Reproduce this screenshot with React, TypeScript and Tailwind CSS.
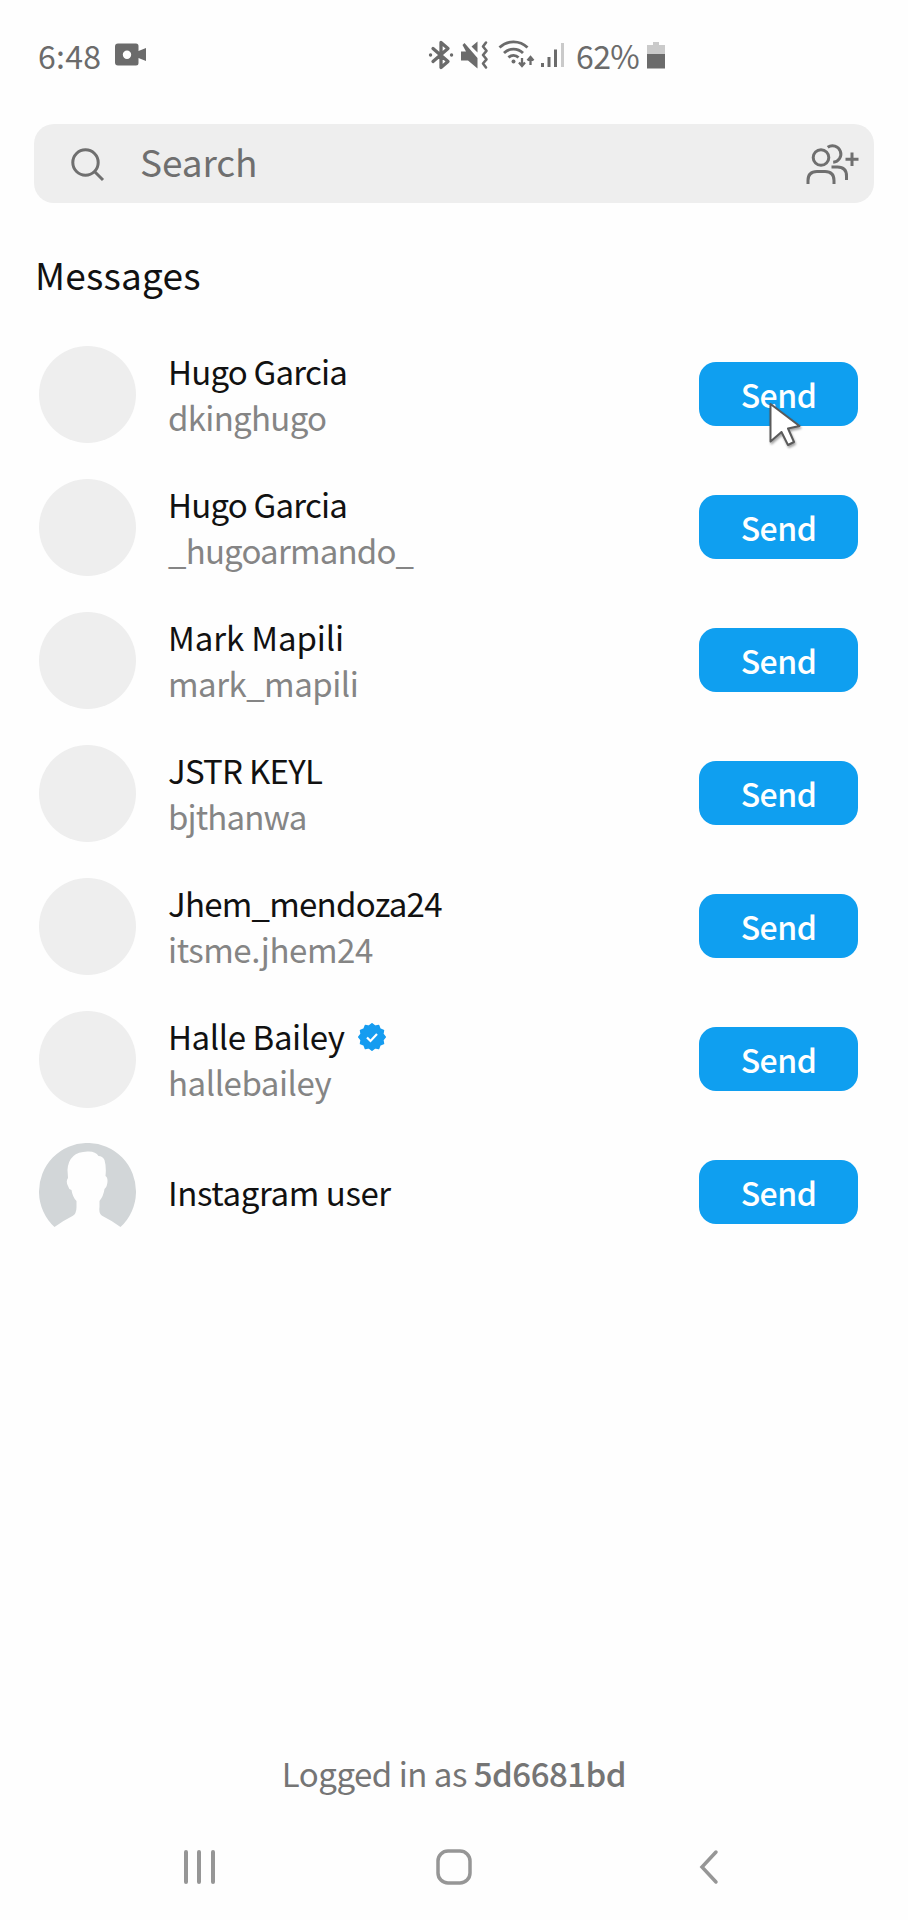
type User = {
  name: string;
  handle?: string;
  nameClass: string;
  handleClass?: string;
  verified?: boolean;
  placeholder?: boolean;
};

const users: User[] = [
  { name: 'Hugo Garcia', handle: 'dkinghugo', nameClass: 'tracking-[-0.8px]', handleClass: 'tracking-[-0.7px]' },
  { name: 'Hugo Garcia', handle: '_hugoarmando_', nameClass: 'tracking-[-0.8px]', handleClass: 'tracking-[-0.8px]' },
  { name: 'Mark Mapili', handle: 'mark_mapili', nameClass: 'tracking-[-0.1px]', handleClass: 'tracking-[-0.5px]' },
  { name: 'JSTR KEYL', handle: 'bjthanwa', nameClass: 'tracking-[-0.75px]', handleClass: 'tracking-[-0.85px]' },
  { name: 'Jhem_mendoza24', handle: 'itsme.jhem24', nameClass: 'tracking-[-0.75px]', handleClass: 'tracking-[-0.45px]' },
  { name: 'Halle Bailey', handle: 'hallebailey', nameClass: 'tracking-[-0.4px]', handleClass: 'tracking-[-0.45px]', verified: true },
  { name: 'Instagram user', nameClass: 'tracking-[-0.4px]', placeholder: true },
];

function StatusBar() {
  return (
    <div className="flex h-28 items-start justify-between pt-[32px] text-[#6b6b6b]">
      <div className="flex items-center pl-[38px]">
        <span className="w-[77px] text-[32px] leading-[46px] tracking-[0.3px]">6:48</span>
        <svg className="h-6 w-8" viewBox="0 0 32 24" fill="currentColor">
          <path fillRule="evenodd" d="M3 0.5h18q2.500 0 2.500 2.500v5l7.500-3v13l-7.500-3v5q0 2.500-2.500 2.500H3q-3 0-3-3v-16q0-3 3-3zM12 7.500a4.200 4.200 0 1 0 0 8.400a4.200 4.200 0 1 0 0-8.400z" />
        </svg>
      </div>
      <div className="flex items-center pr-[242px]">
        <svg className="h-[30px] w-[26px]" viewBox="0 0 26 30" fill="none" stroke="currentColor" strokeWidth="3.300" strokeLinecap="round" strokeLinejoin="round">
          <path d="M5 8.500l15 13-7 6v-25l7 6-15 13M2.500 15h.1M23.500 15h.1" />
        </svg>
        <svg className="ml-[6px] h-[30px] w-[30px]" viewBox="0 0 30 30" fill="currentColor">
          <path d="M1 11.500h5L2.500 5l2-2L17.500 18v10.500L8 20.500H1zM11.500 6.500l6-5v11z" />
          <path d="M26 2.500l-3 4 3.500 4.300-3.500 4.200 3.500 4.300-3.500 4.200 3 4" fill="none" stroke="currentColor" strokeWidth="2.600" strokeLinejoin="round" strokeLinecap="round" />
        </svg>
        <svg className="ml-[8px] h-[30px] w-[38px]" viewBox="0 0 38 30" fill="none" stroke="currentColor" strokeWidth="2.800">
          <path d="M1.500 7.500a20 20 0 0 1 28 0M6 13a13.500 13.500 0 0 1 19 0M10.500 17.500a7 7 0 0 1 10 0" />
          <circle cx="15.500" cy="21.500" r="2" fill="currentColor" stroke="none" />
          <path d="M24 18v7.500M21 22.500l3 3.500 3-3.500M32.500 25v-7M29.500 20.500l3-3.500 3 3.500" strokeWidth="2.300" />
        </svg>
        <svg className="ml-[5px] h-[30px] w-[24px]" viewBox="0 0 24 30" fill="currentColor">
          <path d="M0 23h3v4H0zM6.500 17h3v10h-3zM13 9.500h3V27h-3z" />
          <path d="M20 3h3v24h-3z" opacity="0.35" />
        </svg>
        <span className="ml-[11px] w-[71px] whitespace-nowrap text-[32px] leading-[46px] tracking-[-0.6px]">62%</span>
        <svg className="h-[30px] w-[19px]" viewBox="0 0 19 30" fill="currentColor">
          <path d="M6 2h6v3h6v9H0V5h6z" opacity="0.35" />
          <path d="M0 14h18v14.500H0z" />
        </svg>
      </div>
    </div>
  );
}

function SearchBar() {
  return (
    <div className="mx-[34px] mt-[12px] flex h-[79px] items-center rounded-[20px] bg-[#eeeeee] pr-[15px] pl-[36px] text-[#6f6f6f]">
      <svg className="h-9 w-9" viewBox="0 0 36 36" fill="none" stroke="currentColor" strokeWidth="3">
        <circle cx="15.500" cy="16.500" r="12.700" />
        <path d="M24.500 25.500l8.500 8.500" />
      </svg>
      <span className="mt-[-5px] ml-[34px] text-[37px] leading-[52px] tracking-[-0.1px]">Search</span>
      <svg className="mt-px ml-auto h-[42px] w-[54px]" viewBox="0 0 54 42" fill="none" stroke="currentColor" strokeWidth="3">
        <circle cx="16" cy="14.500" r="7.800" />
        <path d="M3 41v-3.500q0-9 9-9h8q9 0 9 9V41" />
        <path d="M22.700 4.300a8.300 8.300 0 1 1 5.500 15" />
        <path d="M26.500 24h6q9 0 9 9v4" />
        <path d="M47 9.500v13.500M40.500 16.200h13" />
      </svg>
    </div>
  );
}

function VerifiedBadge() {
  // scalloped edge, 12 bumps
  const points = Array.from({ length: 24 }, (_, i) => {
    const r = i % 2 ? 11.2 : 13.2;
    const a = (i * Math.PI) / 12;
    return `${14 + r * Math.cos(a)},${14 + r * Math.sin(a)}`;
  }).join(' ');
  return (
    <svg className="h-7 w-7" viewBox="0 0 28 28">
      <polygon points={points} fill="#159cf0" stroke="#159cf0" strokeWidth="1.600" strokeLinejoin="round" />
      <path d="M9 14.500l3.500 3.500 6.500-7" fill="none" stroke="#fff" strokeWidth="2.200" />
    </svg>
  );
}

function PlaceholderAvatar() {
  return (
    <svg className="mt-px h-[98px] w-[97px]" viewBox="0.5 0 97 98">
      <path
        fill="#d2d6d8"
        d="M16 84A48.500 48.500 0 1 1 82 84Q74 78 64 73Q60 71 61 64V58Q65 53 66 46Q69 43 69 38Q69 34 67 33Q68 24 66 17Q64 13 60 13Q57 8 49 8.500Q30 9 29 27L29.500 35Q27 38 29.500 43Q30 46 33 47Q34 54 38 58V64Q38 71 34 73Q24 78 16 84z"
      />
    </svg>
  );
}

function Cursor() {
  return (
    <svg className="absolute top-[38px] left-[68px] h-12 w-10 drop-shadow-[1px_2px_1px_rgba(0,0,0,0.35)]" viewBox="0 0 40 48">
      <path d="M3.500 4L32.500 26l-11.500 2.500L27 42l-6 3L14.500 32l-11 9.500z" fill="#fff" stroke="#5a5a5a" strokeWidth="2" strokeLinejoin="round" />
    </svg>
  );
}

function UserRow({ user, hovered }: { user: User; hovered: boolean }) {
  return (
    <div className="flex h-[133px] items-center pr-[50px] pl-[39px]">
      {user.placeholder ? <PlaceholderAvatar /> : <div className="mt-px h-[97px] w-[97px] rounded-full bg-[#eeeeee]" />}
      <div className="mt-[2px] ml-8 flex-1 text-[33px] leading-[45.5px] whitespace-nowrap">
        <div className="flex items-center gap-[13px] text-[#111]">
          <span className={user.nameClass}>{user.name}</span>
          {user.verified && <VerifiedBadge />}
        </div>
        {user.handle && (
          <div className="text-[#858585]">
            <span className={user.handleClass}>{user.handle}</span>
          </div>
        )}
      </div>
      <div className="relative">
        <button className="block h-16 w-[159px] rounded-[17px] bg-[#0f9ff0] text-[32px] leading-[64px] font-medium tracking-[-0.5px] text-white">
          Send
        </button>
        {hovered && <Cursor />}
      </div>
    </div>
  );
}

export default function App() {
  return (
    <div className="flex h-[1920px] w-[908px] flex-col bg-[#fefefe] font-['Noto_Sans_CJK_SC','Noto_Sans',sans-serif]">
      <StatusBar />
      <SearchBar />
      <h1 className="mt-[44px] h-[80px] pl-[35px] text-[37px] leading-[54px] tracking-[0.2px] text-[#111]">
        <span>Messages</span>
      </h1>
      <div>
        {users.map((user, i) => (
          <UserRow key={i} user={user} hovered={i === 0} />
        ))}
      </div>
      <div className="mt-auto text-center text-[33px] leading-[48px] tracking-[-0.5px] text-[#757575]">
        Logged in as <span className="font-medium">5d6681bd</span>
      </div>
      <div className="mt-[50px] mb-[33px] flex h-10 items-center pl-[183px] text-[#969696]">
        <svg className="h-9 w-9" viewBox="0 0 36 36" stroke="currentColor" strokeWidth="4" strokeLinecap="round">
          <path d="M3 3v30M16 3v30M30 3v30" />
        </svg>
        <svg className="ml-[217px] h-9 w-9" viewBox="0 0 36 36" fill="none" stroke="currentColor" strokeWidth="3.500">
          <rect x="2" y="2" width="32" height="32" rx="10" />
        </svg>
        <svg className="ml-[227px] h-9 w-5" viewBox="0 0 20 36" fill="none" stroke="currentColor" strokeWidth="3.500" strokeLinecap="round">
          <path d="M17 3L3 18l14 15" />
        </svg>
      </div>
    </div>
  );
}
